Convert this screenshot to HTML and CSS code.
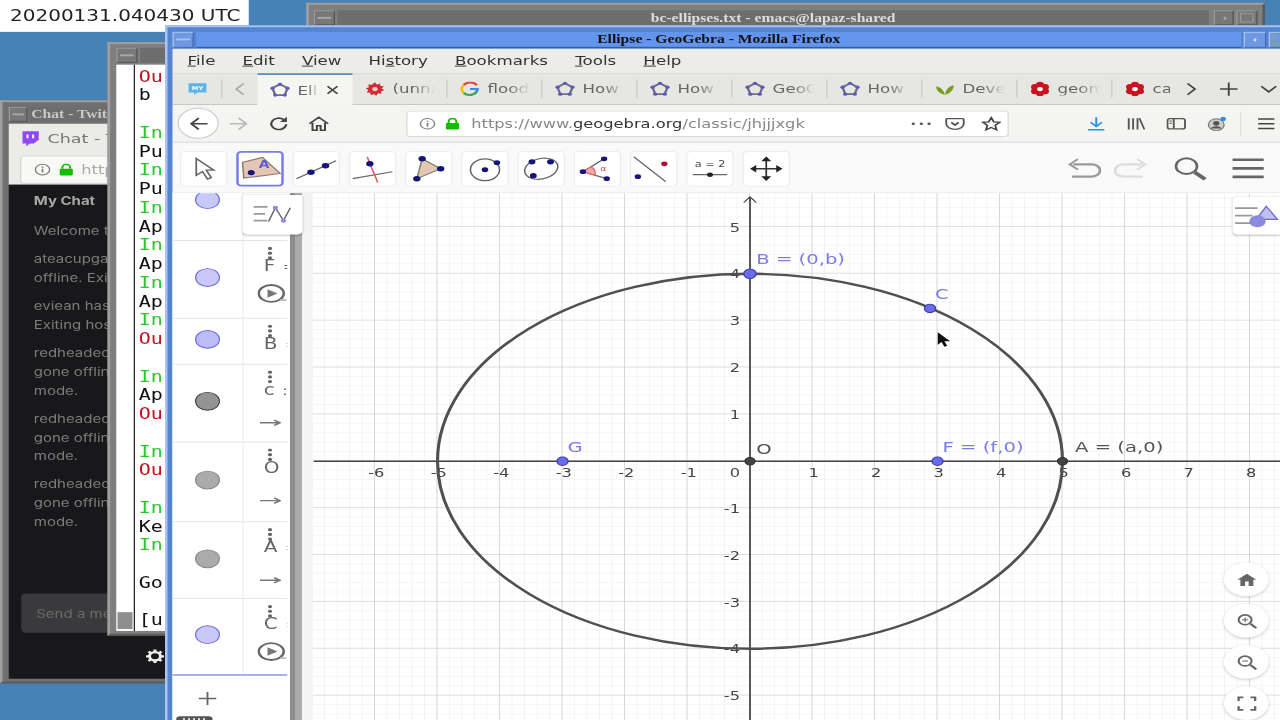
FILE: index.html
```html
<!DOCTYPE html>
<html lang="en">
<head>
<meta charset="utf-8">
<title>Ellipse - GeoGebra</title>
<link rel="stylesheet" href="styles.css">
</head>
<body>
<svg class="defs" width="0" height="0" aria-hidden="true">
  <symbol id="ggb" viewBox="0 0 16 16">
    <path d="M8 1.800 14 6 11.800 13.400 4.200 13.400 2 6Z" fill="none" stroke="#6e6e7c" stroke-width="1.900"/>
    <g fill="#5f58c4"><circle cx="8" cy="1.800" r="1.700"/><circle cx="14" cy="6" r="1.700"/><circle cx="11.800" cy="13.400" r="1.700"/><circle cx="4.200" cy="13.400" r="1.700"/><circle cx="2" cy="6" r="1.700"/></g>
  </symbol>
  <symbol id="burst" viewBox="0 0 16 16">
    <path d="M8 .8 9.500 3.400 12 2 12.300 4.800 15 5 13.400 7.300 15.400 9.300 12.800 10.200 13.200 13 10.400 12.500 9 15.200 7 13.200 4.800 14.600 4.200 11.800 1.400 11.600 2.600 9 .6 7 3.200 6 2.600 3.200 5.500 3.500Z" fill="#cf2a30"/>
    <circle cx="8" cy="8" r="2.200" fill="#f3c8c8"/>
  </symbol>
  <symbol id="flower" viewBox="0 0 16 16">
    <g fill="#c8141e"><circle cx="8" cy="3.500" r="3.200"/><circle cx="12" cy="5.800" r="3.200"/><circle cx="12" cy="10.200" r="3.200"/><circle cx="8" cy="12.500" r="3.200"/><circle cx="4" cy="10.200" r="3.200"/><circle cx="4" cy="5.800" r="3.200"/></g>
    <circle cx="8" cy="8" r="2.300" fill="#fff"/>
  </symbol>
  <symbol id="dots" viewBox="0 0 4 14">
    <g fill="#666"><circle cx="2" cy="2" r="1.700"/><circle cx="2" cy="7" r="1.700"/><circle cx="2" cy="12" r="1.700"/></g>
  </symbol>
  <symbol id="play" viewBox="0 0 24 22">
    <ellipse cx="11" cy="11" rx="10" ry="9" fill="#fff" stroke="#666" stroke-width="2"/>
    <path d="M8 6.500 16 11 8 15.500Z" fill="#777"/>
    <path d="M18 18h5" stroke="#bbb" stroke-width="2"/>
  </symbol>
  <symbol id="arrow" viewBox="0 0 18 10">
    <path d="M0 5h15M12 2l5 3-5 3" fill="none" stroke="#777" stroke-width="1.600"/>
  </symbol>
  <symbol id="info" viewBox="0 0 16 16">
    <circle cx="8" cy="8" r="6.500" fill="none" stroke="#777" stroke-width="1.200"/>
    <path d="M8 7v4.500M8 4.200v1.400" stroke="#777" stroke-width="1.500"/>
  </symbol>
  <symbol id="lock" viewBox="0 0 16 16">
    <path d="M4.500 7V5a3.500 3.500 0 0 1 7 0v2" fill="none" stroke="#12bc00" stroke-width="1.800"/>
    <rect x="2" y="7" width="12" height="8" rx="1" fill="#12bc00"/>
  </symbol>
</svg>

<div class="desktop">
  <div class="stamp">20200131.040430 UTC</div>

  <section class="win win-gray emacs">
    <div class="titlebar">
      <span class="wbtn wbtn-menu"></span>
      <span class="wtitle">bc-ellipses.txt - emacs@lapaz-shared</span>
      <span class="wbtn wbtn-small"></span>
      <span class="wbtn wbtn-max"></span>
    </div>
  </section>

  <section class="win win-gray chat">
    <div class="titlebar chat-titlebar">
      <span class="wbtn wbtn-menu"></span>
      <span class="wtitle wtitle-left">Chat - Twitch</span>
    </div>
    <div class="chat-browser">
      <div class="chat-head">
        <svg class="twitch" viewBox="0 0 16 17"><path d="M2 1h13v9l-4 4H8l-3 3v-3H2Z" fill="#9146ff"/><path d="M6 4.500v4M10.500 4.500v4" stroke="#fff" stroke-width="1.600"/></svg>
        <span>Chat - T</span>
      </div>
      <div class="chat-url">
        <svg class="ico14"><use href="#info"/></svg>
        <svg class="ico14"><use href="#lock"/></svg>
        <span>http</span>
      </div>
    </div>
    <div class="chat-dark">
      <div class="chat-tab">My Chat</div>
      <div class="chat-log">
        <p>Welcome t</p>
        <p>ateacupga<br>offline. Exit</p>
        <p>eviean has<br>Exiting hos</p>
        <p>redheaded<br>gone offlin<br>mode.</p>
        <p>redheaded<br>gone offlin<br>mode.</p>
        <p>redheaded<br>gone offlin<br>mode.</p>
      </div>
      <div class="chat-input">Send a me</div>
      <div class="chat-foot">
        <svg class="gear" viewBox="0 0 20 20"><circle cx="10" cy="10" r="5.500" fill="none" stroke="#eee" stroke-width="3"/><path d="M10 1v3M10 16v3M1 10h3M16 10h3M3.600 3.600l2.200 2.200M14.200 14.200l2.200 2.200M3.600 16.400l2.200-2.200M14.200 5.800l2.200-2.200" stroke="#eee" stroke-width="3"/></svg>
      </div>
    </div>
  </section>

  <section class="win win-gray term">
    <div class="titlebar">
      <span class="wbtn wbtn-menu"></span>
      <span class="wtitle"></span>
    </div>
    <div class="term-body">
      <div class="term-scroll"><span class="grip"></span></div>
      <div class="term-text">
        <div class="out">Ou</div><div>b</div><div>&nbsp;</div>
        <div class="inp">In</div><div>Pu</div>
        <div class="inp">In</div><div>Pu</div>
        <div class="inp">In</div><div>Ap</div>
        <div class="inp">In</div><div>Ap</div>
        <div class="inp">In</div><div>Ap</div>
        <div class="inp">In</div><div class="out">Ou</div><div>&nbsp;</div>
        <div class="inp">In</div><div>Ap</div><div class="out">Ou</div><div>&nbsp;</div>
        <div class="inp">In</div><div class="out">Ou</div><div>&nbsp;</div>
        <div class="inp">In</div><div>Ke</div><div class="inp">In</div><div>&nbsp;</div>
        <div>Go</div><div>&nbsp;</div><div>[u</div>
      </div>
    </div>
  </section>

  <section class="win win-blue firefox">
    <div class="titlebar ff-titlebar">
      <span class="wbtn wbtn-menu"></span>
      <span class="wtitle">Ellipse - GeoGebra - Mozilla Firefox</span>
      <span class="wbtn wbtn-small"></span>
      <span class="wbtn wbtn-max"></span>
    </div>

    <nav class="menubar">
      <span><u>F</u>ile</span><span><u>E</u>dit</span><span><u>V</u>iew</span><span>Hi<u>s</u>tory</span><span><u>B</u>ookmarks</span><span><u>T</u>ools</span><span><u>H</u>elp</span>
    </nav>

    <div class="tabbar">
      <div class="tab-my">
        <svg viewBox="0 0 18 18" class="ico16"><path d="M1 2h16v11H9l-3 3v-3H1Z" fill="#5cb5e8"/><text x="9" y="10.500" class="my-text">MY</text></svg>
      </div>
      <div class="tab-scroll">
        <svg viewBox="0 0 10 14" class="chev"><path d="M8 1 2 7l6 6" fill="none" stroke="#aaa" stroke-width="1.600"/></svg>
      </div>
      <div class="tab tab-active"><svg class="ico16"><use href="#ggb"/></svg><span class="tab-label tab-label-short">Ell</span><svg class="tab-x" viewBox="0 0 12 12"><path d="M2 2l8 8M10 2l-8 8" stroke="#444" stroke-width="1.500"/></svg></div>
      <div class="tab"><svg class="ico16"><use href="#burst"/></svg><span class="tab-label">(unna</span></div>
      <div class="tab"><svg class="ico16" viewBox="0 0 16 16"><path d="M13.500 4A6.200 6.200 0 0 0 3 3.800" fill="none" stroke="#ea4335" stroke-width="2.200"/><path d="M3 3.800a6.200 6.200 0 0 0 0 8.400" fill="none" stroke="#fbbc05" stroke-width="2.200"/><path d="M3 12.200a6.200 6.200 0 0 0 10.500-2" fill="none" stroke="#34a853" stroke-width="2.200"/><path d="M8 8h6a6 6 0 0 1-1 3" fill="none" stroke="#4285f4" stroke-width="2.200"/></svg><span class="tab-label">flood</span></div>
      <div class="tab"><svg class="ico16"><use href="#ggb"/></svg><span class="tab-label">How</span></div>
      <div class="tab"><svg class="ico16"><use href="#ggb"/></svg><span class="tab-label">How</span></div>
      <div class="tab"><svg class="ico16"><use href="#ggb"/></svg><span class="tab-label">GeoG</span></div>
      <div class="tab"><svg class="ico16"><use href="#ggb"/></svg><span class="tab-label">How</span></div>
      <div class="tab"><svg class="ico16" viewBox="0 0 16 16"><path d="M8 14C7 9 4 6 1 5c0 5 3 8 7 9ZM8 14c1-6 3-9 7-10 0 5-3 9-7 10Z" fill="#7a9a1e"/></svg><span class="tab-label">Deve</span></div>
      <div class="tab"><svg class="ico16"><use href="#flower"/></svg><span class="tab-label">geom</span></div>
      <div class="tab tab-last"><svg class="ico16"><use href="#flower"/></svg><span class="tab-label">ca</span></div>
      <div class="tab-tools">
        <svg viewBox="0 0 10 14" class="chev"><path d="M2 1l6 6-6 6" fill="none" stroke="#444" stroke-width="1.600"/></svg>
        <svg viewBox="0 0 16 16" class="ico16"><path d="M8 1v14M1 8h14" stroke="#444" stroke-width="1.500"/></svg>
        <svg viewBox="0 0 14 10" class="chev-down"><path d="M1 2l6 6 6-6" fill="none" stroke="#444" stroke-width="1.600"/></svg>
      </div>
    </div>

    <div class="navbar">
      <button class="nav-back"><svg viewBox="0 0 18 18" class="ico18"><path d="M16 9H3M9 3 3 9l6 6" fill="none" stroke="#444" stroke-width="1.700"/></svg></button>
      <svg viewBox="0 0 18 18" class="ico18 nav-fwd"><path d="M2 9h13M9 3l6 6-6 6" fill="none" stroke="#bbb" stroke-width="1.700"/></svg>
      <svg viewBox="0 0 18 18" class="ico18 nav-item"><path d="M15 9.500A6 6 0 1 1 13 4.600" fill="none" stroke="#444" stroke-width="1.800"/><path d="M15.500 1.500V7H10Z" fill="#444"/></svg>
      <svg viewBox="0 0 18 18" class="ico18 nav-item"><path d="M1.500 9 9 2l7.500 7M4 8v8h3.500v-5h3v5H14V8" fill="none" stroke="#444" stroke-width="1.600"/></svg>
      <div class="urlbar">
        <svg class="ico14"><use href="#info"/></svg>
        <svg class="ico14 url-lock"><use href="#lock"/></svg>
        <span class="url-text">https://www.<b>geogebra.org</b>/classic/jhjjjxgk</span>
        <span class="url-more">•••</span>
        <svg viewBox="0 0 16 16" class="ico16 url-ico"><path d="M2 2.500h12a1 1 0 0 1 1 1V8a7 6 0 0 1-14 0V3.500a1 1 0 0 1 1-1Z" fill="none" stroke="#555" stroke-width="1.500"/><path d="M5 6.500 8 9.500l3-3" fill="none" stroke="#555" stroke-width="1.700"/></svg>
        <svg viewBox="0 0 16 16" class="ico16 url-ico"><path d="M8 1.500 10 6l4.800.500-3.600 3.200 1 4.800L8 12l-4.200 2.500 1-4.800L1.200 6.500 6 6Z" fill="none" stroke="#444" stroke-width="1.500"/></svg>
      </div>
      <div class="nav-right">
        <svg viewBox="0 0 16 16" class="ico16"><path d="M8 1v9M3.500 6.500 8 11l4.500-4.500M1.500 14.500h13" fill="none" stroke="#2a90e8" stroke-width="1.600"/></svg>
        <svg viewBox="0 0 16 16" class="ico16"><path d="M2 2v12M5.500 2v12M9 2v12M10.500 2l4 12" fill="none" stroke="#555" stroke-width="1.500"/></svg>
        <svg viewBox="0 0 16 16" class="ico16"><rect x="1" y="2.500" width="14" height="11" rx="2" fill="none" stroke="#555" stroke-width="1.500"/><path d="M6 3v10" stroke="#555" stroke-width="1.500"/><path d="M2.500 5h2M2.500 7.500h2" stroke="#555"/></svg>
        <svg viewBox="0 0 16 16" class="ico16"><circle cx="8" cy="9" r="6.300" fill="#ccc" stroke="#777"/><circle cx="8" cy="7.500" r="2.500" fill="#555"/><path d="M3.500 13a5 4 0 0 1 9 0" fill="#555"/><circle cx="13.500" cy="2.800" r="2.200" fill="#2a90e8"/></svg>
        <span class="nav-sep"></span>
        <svg viewBox="0 0 16 16" class="ico16"><path d="M1.500 3h13M1.500 8h13M1.500 13h13" stroke="#444" stroke-width="1.500"/></svg>
      </div>
    </div>

    <div class="ggb-toolbar">
      <button class="tool"><svg class="tool-plain" viewBox="0 0 28 28"><path d="M8 3v18l5-4 4 8 3-1.500-4-8h6Z" fill="#fff" stroke="#666" stroke-width="1.400"/></svg></button>
      <button class="tool tool-active"><svg viewBox="0 0 36 28"><path d="M4 7 20 2 34 19 5 24Z" fill="#e3c6b4" stroke="#8a7a70" stroke-width="1.200"/><circle cx="11" cy="18" r="2.800" fill="#14147a"/><text x="17" y="13" class="tool-a">A</text></svg></button>
      <button class="tool"><svg viewBox="0 0 34 26"><path d="M2 23 32 5" stroke="#666" stroke-width="1.200"/><circle cx="13" cy="16.500" r="2.800" fill="#14147a"/><circle cx="24" cy="10" r="2.800" fill="#14147a"/></svg></button>
      <button class="tool"><svg viewBox="0 0 34 28"><path d="M2 24 32 17" stroke="#666" stroke-width="1.200"/><path d="M13 2 21 28" stroke="#e0555f" stroke-width="1.200"/><circle cx="15" cy="9" r="2.800" fill="#14147a"/></svg></button>
      <button class="tool"><svg viewBox="0 0 34 28"><path d="M12 4 26 14 8 24Z" fill="#e3c6b4" stroke="#7d8a6a" stroke-width="1.200"/><circle cx="12" cy="4" r="2.800" fill="#14147a"/><circle cx="26" cy="14" r="2.800" fill="#14147a"/><circle cx="8" cy="24" r="2.800" fill="#14147a"/></svg></button>
      <button class="tool"><svg viewBox="0 0 34 28"><circle cx="17" cy="15" r="11" fill="none" stroke="#666" stroke-width="1.200"/><circle cx="17" cy="15" r="2.500" fill="#14147a"/><circle cx="26" cy="8" r="2.500" fill="#14147a"/></svg></button>
      <button class="tool"><svg viewBox="0 0 34 28"><ellipse cx="17" cy="14" rx="13" ry="10" transform="rotate(-25 17 14)" fill="none" stroke="#666" stroke-width="1.200"/><circle cx="10" cy="7" r="2.600" fill="#14147a"/><circle cx="24" cy="7" r="2.600" fill="#14147a"/><circle cx="11" cy="21" r="2.600" fill="#14147a"/></svg></button>
      <button class="tool"><svg viewBox="0 0 34 28"><path d="M22 4 6 17 24 24" fill="none" stroke="#666" stroke-width="1.200"/><path d="M12 12A8 8 0 0 1 15 20.500L6 17Z" fill="#f4a9a0" stroke="#d66"/><circle cx="22" cy="4" r="2.400" fill="#14147a"/><circle cx="6" cy="17" r="2.400" fill="#14147a"/><circle cx="24" cy="24" r="2.400" fill="#14147a"/><text x="19" y="16" class="tool-alpha">α</text></svg></button>
      <button class="tool"><svg viewBox="0 0 34 28"><path d="M2 2 26 27" stroke="#666" stroke-width="1.200"/><circle cx="5" cy="22" r="2.400" fill="#14147a"/><circle cx="25" cy="9" r="2.400" fill="#b01030"/></svg></button>
      <button class="tool"><svg viewBox="0 0 34 28"><text x="17" y="12" class="tool-eq">a = 2</text><path d="M4 20h26" stroke="#666" stroke-width="1.200"/><circle cx="17" cy="20" r="2.200" fill="#222"/></svg></button>
      <button class="tool"><svg class="tool-plain" viewBox="0 0 28 28"><path d="M14 3v22M3 14h22" stroke="#333" stroke-width="1.400"/><path d="M14 1l4 5h-8ZM14 27l4-5h-8ZM1 14l5-4v8ZM27 14l-5-4v8Z" fill="#222"/></svg></button>
      <div class="tool-right">
        <svg viewBox="0 0 30 24" class="act"><path d="M6 7h16a6 6 0 0 1 0 14H5" fill="none" stroke="#999" stroke-width="2.400"/><path d="M10 1 3 7l7 6" fill="none" stroke="#999" stroke-width="2"/></svg>
        <svg viewBox="0 0 30 24" class="act act-redo"><path d="M24 7H8a6 6 0 0 0 0 14h17" fill="none" stroke="#ddd" stroke-width="2.400"/><path d="M20 1l7 6-7 6" fill="none" stroke="#ddd" stroke-width="2"/></svg>
        <svg viewBox="0 0 30 26" class="act act-search"><circle cx="12" cy="10" r="9" fill="none" stroke="#666" stroke-width="2.200"/><path d="M19 17l9 8" stroke="#666" stroke-width="4"/></svg>
        <svg viewBox="0 0 28 24" class="act act-menu"><path d="M1 2.500h26M1 12h26M1 21.500h26" stroke="#666" stroke-width="3"/></svg>
      </div>
    </div>

    <div class="ggb-main">
      <aside class="algebra">
        <div class="alg-row alg-first"><span class="marble m-blue"></span><div class="alg-tag"><svg class="dots"><use href="#dots"/></svg></div></div>
        <div class="alg-row alg-tall"><span class="marble m-blue"></span><div class="alg-tag"><svg class="dots"><use href="#dots"/></svg><span class="alg-name">F <i>=</i></span><svg class="play"><use href="#play"/></svg></div></div>
        <div class="alg-row alg-short"><span class="marble m-blue2"></span><div class="alg-tag"><svg class="dots"><use href="#dots"/></svg><span class="alg-name">B <i>=</i></span></div></div>
        <div class="alg-row alg-tall"><span class="marble m-dark"></span><div class="alg-tag"><svg class="dots"><use href="#dots"/></svg><span class="alg-name">c <i>:</i></span><svg class="arr"><use href="#arrow"/></svg></div></div>
        <div class="alg-row alg-tall2"><span class="marble m-gray"></span><div class="alg-tag"><svg class="dots"><use href="#dots"/></svg><span class="alg-name">O <i>=</i></span><svg class="arr"><use href="#arrow"/></svg></div></div>
        <div class="alg-row alg-mid"><span class="marble m-gray"></span><div class="alg-tag"><svg class="dots"><use href="#dots"/></svg><span class="alg-name">A <i>=</i></span><svg class="arr"><use href="#arrow"/></svg></div></div>
        <div class="alg-row alg-mid alg-last"><span class="marble m-blue"></span><div class="alg-tag"><svg class="dots"><use href="#dots"/></svg><span class="alg-name">C <i>=</i></span><svg class="play"><use href="#play"/></svg></div></div>
        <div class="alg-add">
          <svg viewBox="0 0 16 16" class="ico16"><path d="M8 1v14M1 8h14" stroke="#666" stroke-width="1.500"/></svg>
        </div>
        <div class="kbd-tab"><span></span></div>
      </aside>
      <div class="alg-toggle">
        <svg viewBox="0 0 36 24"><path d="M1 3h12M1 11h10M1 19h12" stroke="#999" stroke-width="2"/><path d="M14 20 20 4 27 19 33 4" fill="none" stroke="#666" stroke-width="1.300"/><circle cx="20" cy="4" r="2.300" fill="#8a8ae0"/><circle cx="27" cy="19" r="2.300" fill="#8a8ae0"/></svg>
      </div>
      <div class="divider"></div>
      <div class="graph">
        <svg class="plot" viewBox="250 206 774 562" xmlns="http://www.w3.org/2000/svg">
          <defs>
            <pattern id="minor" x="600" y="492" width="10" height="10" patternUnits="userSpaceOnUse"><path d="M10 0V10M0 10H10" fill="none" stroke="#eeeeee" stroke-width="1"/></pattern>
            <pattern id="major" x="600" y="492" width="50" height="50" patternUnits="userSpaceOnUse"><path d="M50 0V50M0 50H50" fill="none" stroke="#c9c9c9" stroke-width="1"/></pattern>
          </defs>
          <rect x="250" y="206" width="774" height="562" fill="#fff"/>
          <rect x="250" y="206" width="774" height="562" fill="url(#minor)"/>
          <rect x="250" y="206" width="774" height="562" fill="url(#major)"/>
          <path d="M251 492H1024M600 211V768" stroke="#444" stroke-width="1.400"/>
          <path d="M595 216 600 210 605 216" fill="none" stroke="#444" stroke-width="1.100"/>
          <g class="ticks-x">
            <text x="301" y="509">-6</text><text x="351" y="509">-5</text><text x="401" y="509">-4</text><text x="451" y="509">-3</text><text x="501" y="509">-2</text><text x="551" y="509">-1</text><text x="588" y="509">0</text><text x="651" y="509">1</text><text x="701" y="509">2</text><text x="751" y="509">3</text><text x="801" y="509">4</text><text x="851" y="509">5</text><text x="901" y="509">6</text><text x="951" y="509">7</text><text x="1001" y="509">8</text>
          </g>
          <g class="ticks-y">
            <text x="592" y="247">5</text><text x="592" y="297">4</text><text x="592" y="347">3</text><text x="592" y="397">2</text><text x="592" y="447">1</text><text x="592" y="547">-1</text><text x="592" y="597">-2</text><text x="592" y="647">-3</text><text x="592" y="697">-4</text><text x="592" y="747">-5</text>
          </g>
          <ellipse cx="600" cy="492" rx="250" ry="200" fill="none" stroke="#505050" stroke-width="2.500"/>
          <circle class="pt" cx="600" cy="292" r="5"/>
          <circle class="pt" cx="744" cy="329" r="4.500"/>
          <circle class="pt" cx="750" cy="492" r="4.500"/>
          <circle class="pt" cx="450" cy="492" r="4.500"/>
          <circle class="pt-dark" cx="850" cy="492" r="4"/>
          <circle class="pt-dark" cx="600" cy="492" r="4"/>
          <text class="lbl" x="605" y="282">B = (0,b)</text>
          <text class="lbl" x="748" y="319">C</text>
          <text class="lbl" x="754" y="482">F = (f,0)</text>
          <text class="lbl" x="454" y="482">G</text>
          <text class="lbl-dark" x="860" y="482">A = (a,0)</text>
          <text class="lbl-dark" x="605" y="484">O</text>
        </svg>
        <div class="style-btn">
          <svg viewBox="0 0 36 26"><path d="M1 5h18M1 13h14M1 21h14" stroke="#999" stroke-width="2"/><path d="M18 17 26 3 35 17Z" fill="#a5a5ee" fill-opacity=".7" stroke="#6a6ad0" stroke-width="1.200"/><circle cx="19" cy="19" r="6.500" fill="#8a8ae0"/></svg>
        </div>
        <div class="view-btns">
          <span class="round"><svg viewBox="0 0 18 18"><path d="M9 2 1 9h2.500v7h4v-5h3v5h4V9H17Z" fill="#666"/></svg></span>
          <span class="round"><svg viewBox="0 0 18 18"><circle cx="7.500" cy="7.500" r="5.500" fill="none" stroke="#666" stroke-width="1.800"/><path d="M12 12l5 5" stroke="#666" stroke-width="2.200"/><path d="M5 7.500h5M7.500 5v5" stroke="#666"/></svg></span>
          <span class="round"><svg viewBox="0 0 18 18"><circle cx="7.500" cy="7.500" r="5.500" fill="none" stroke="#666" stroke-width="1.800"/><path d="M12 12l5 5" stroke="#666" stroke-width="2.200"/><path d="M5 7.500h5" stroke="#666"/></svg></span>
          <span class="round"><svg viewBox="0 0 18 18"><path d="M2 6V2h4M12 2h4v4M16 12v4h-4M6 16H2v-4" fill="none" stroke="#666" stroke-width="2"/></svg></span>
        </div>
      </div>
    </div>
  </section>

  <svg class="cursor" viewBox="0 0 12 18"><path d="M0 0V15L3.500 11.500 6 17 8.500 16 6 10.500H11Z" fill="#111"/></svg>
</div>
</body>
</html>
```

FILE: styles.css
```css
html, body {
  margin: 0;
  width: 1280px;
  height: 720px;
  overflow: hidden;
  background: #4682b4;
}
.defs { position: absolute; }
button { font: inherit; margin: 0; padding: 0; }

/* The capture is a 1024x768 screen stretched to 1280x720 */
.desktop {
  position: relative;
  width: 1024px;
  height: 768px;
  overflow: hidden;
  background: #4682b4;
  transform: scale(1.25, 0.9375);
  transform-origin: 0 0;
  filter: blur(0.45px);
  font-family: "DejaVu Sans", sans-serif;
}

.stamp {
  position: absolute;
  left: 0;
  top: 0;
  width: 191px;
  height: 34px;
  padding-left: 8px;
  background: #fff;
  color: #222;
  font-size: 16px;
  line-height: 33px;
}

/* window manager frames */
.win { position: absolute; box-sizing: border-box; overflow: hidden; }
.win-gray {
  background: #7f7f7f;
  border: 2px solid;
  border-color: #a0a0a0 #5a5a5a #5a5a5a #a0a0a0;
  padding: 4px;
}
.win-blue {
  background: #5585d0;
  border: 2px solid;
  border-color: #a9c3f2 #3e68b8 #3e68b8 #a9c3f2;
  padding: 5px 0 0 4px;
}
.titlebar { display: flex; height: 16px; gap: 2px; align-items: stretch; }
.wtitle {
  flex: 1;
  min-width: 0;
  overflow: hidden;
  white-space: nowrap;
  font: bold 12.5px/16px "Liberation Serif", serif;
  text-align: center;
  background: #6d6d6d;
  color: #ddd;
}
.wtitle-left { text-align: left; padding-left: 4px; }
.wbtn {
  width: 17px;
  flex: none;
  box-sizing: border-box;
  background: #787878;
  border: 1px solid;
  border-color: #9a9a9a #555 #555 #9a9a9a;
  position: relative;
}
.wbtn-menu::after {
  content: "";
  position: absolute;
  left: 2px; right: 2px; top: 6px;
  height: 2px;
  background: #a8a8a8;
}
.wbtn-small::after {
  content: "";
  position: absolute;
  left: 7px; top: 6px;
  width: 2px; height: 3px;
  background: #aaa;
}
.wbtn-max::after {
  content: "";
  position: absolute;
  left: 2px; top: 2px; right: 2px; bottom: 2px;
  border: 1px solid #999;
}

.emacs { left: 245px; top: 3px; width: 767px; height: 60px; }
.emacs .titlebar { margin: 2px 0 0 0; }
.emacs .wbtn-small { width: 16px; margin-left: 2px; }

/* chat window */
.chat { left: 0; top: 107px; width: 140px; height: 622px; padding: 5px 6px 3px 5px; display: flex; flex-direction: column; background: #707070; }
.chat-titlebar .wbtn { width: 15px; }
.chat-titlebar .wtitle { padding-left: 1px; color: #c8c8c8; }
.chat-browser { background: #ebebe8; height: 65px; margin-top: 2px; color: #777; box-sizing: border-box; padding: 5px 0 0 9px; }
.chat-head { display: flex; align-items: center; gap: 6px; height: 20px; font-size: 14px; white-space: nowrap; }
.twitch { width: 16px; height: 17px; flex: none; }
.chat-url {
  margin-top: 9px;
  height: 30px;
  background: #f8f8f6;
  border: 1px solid #d4d4d0;
  border-radius: 3px;
  box-sizing: border-box;
  display: flex;
  align-items: center;
  gap: 5px;
  padding-left: 10px;
  font-size: 13px;
  color: #aaa;
}
.ico14 { width: 14px; height: 14px; flex: none; }
.chat-dark { flex: 1; background: #18181b; color: #7c7c7c; position: relative; display: flex; flex-direction: column; font-family: Inter, sans-serif; }
.chat-tab { padding: 10px 0 0 20px; height: 28px; box-sizing: border-box; font-size: 12px; font-weight: bold; line-height: 16px; color: #a8a8a8; }
.chat-log { padding: 12px 0 0 20px; font-size: 12px; line-height: 20px; flex: 1; white-space: nowrap; }
.chat-log p { margin: 0 0 10px; }
.chat-input {
  margin-left: 10px;
  width: 120px;
  height: 42px;
  box-sizing: border-box;
  padding: 14px 0 0 12px;
  border-radius: 4px;
  background: #3a3a3d;
  color: #6a6a6a;
  font-size: 12px;
}
.chat-foot { height: 49px; display: flex; justify-content: flex-end; align-items: center; }
.gear { width: 16px; height: 16px; }

/* terminal */
.term { left: 86px; top: 45px; width: 120px; height: 633px; padding: 4px 5px 3px 5px; display: flex; flex-direction: column; }
.term .wbtn { width: 17px; }
.term-body { flex: 1; display: flex; margin-top: 2px; background: #fff; min-height: 0; }
.term-scroll {
  width: 14px;
  border-right: 1px solid #222;
  display: flex;
  align-items: flex-end;
  justify-content: center;
  flex: none;
  padding-bottom: 2px;
}
.grip { width: 12px; height: 18px; background: #8e8e8e; }
.term-text {
  padding: 3px 0 0 3px;
  font: 16px/20px "DejaVu Sans Mono", monospace;
  color: #111;
}
.out { color: #c81020; }
.inp { color: #2ac82a; }

/* firefox */
.firefox { left: 132px; top: 27px; width: 920px; height: 745px; display: flex; flex-direction: column; }
.ff-titlebar { flex: none; height: 17px; margin-bottom: 1px; }
.ff-titlebar .wbtn { background: #6f98e2; border-color: #a9c3f2 #3e68b8 #3e68b8 #a9c3f2; }
.ff-titlebar .wbtn-menu::after { background: #a9c3f2; }
.ff-titlebar .wbtn-small::after { background: #cfe0fa; }
.ff-titlebar .wbtn-max { width: 35px; }
.ff-titlebar .wbtn-small { width: 18px; margin-left: 0; }
.ff-titlebar .wtitle {
  background: #6495ed;
  color: #111;
  line-height: 17px;
  border-bottom: 1px solid #2d4f96;
}

.menubar {
  flex: none;
  height: 26px;
  background: #ecece8;
  display: flex;
  gap: 21.7px;
  padding-left: 12px;
  font-size: 13.33px;
  line-height: 26px;
  color: #333;
}
.tabbar {
  flex: none;
  height: 34px;
  background: #e6e6e3;
  border-bottom: 1px solid #c6c6c2;
  box-sizing: border-box;
  display: flex;
  align-items: stretch;
}
.tab-my { width: 40px; display: flex; align-items: center; justify-content: center; position: relative; }
.tab-my::after { content: ""; position: absolute; right: 0; top: 7px; bottom: 7px; width: 1px; background: #c8c8c4; }
.my-text { font: bold 6px "DejaVu Sans", sans-serif; fill: #fff; text-anchor: middle; }
.tab-scroll { width: 28px; display: flex; align-items: center; justify-content: center; }
.chev { width: 10px; height: 14px; }
.chev-down { width: 14px; height: 10px; }
.ico16 { width: 16px; height: 16px; flex: none; }
.ico18 { width: 18px; height: 18px; flex: none; }
.tab {
  width: 76px;
  box-sizing: border-box;
  padding-left: 10px;
  flex: none;
  display: flex;
  align-items: center;
  gap: 6px;
  font-size: 13.33px;
  color: #666;
  position: relative;
}
.tab::after { content: ""; position: absolute; right: 0; top: 7px; bottom: 7px; width: 1px; background: #c8c8c4; }
.tab-label {
  width: 36px;
  overflow: hidden;
  white-space: nowrap;
  -webkit-mask-image: linear-gradient(90deg, #000 45%, transparent 95%);
  mask-image: linear-gradient(90deg, #000 45%, transparent 95%);
}
.tab-label-short { width: 18px; }
.tab-x { width: 12px; height: 12px; flex: none; margin-left: -2px; }
.tab-active {
  background: #f5f5f3;
  border-top: 2px solid #5f8fd0;
  margin-bottom: -1px;
}
.tab-active::after, .tab-last::after { display: none; }
.tab-last { width: 46px; }
.tab-last .tab-label { width: 16px; -webkit-mask-image: none; mask-image: none; }
.tab-tools { display: flex; align-items: center; flex: none; }
.tab-tools .chev { margin-left: 12px; }
.tab-tools .ico16 { margin-left: 17px; }
.tab-tools .chev-down { margin-left: 17px; }

.navbar {
  flex: none;
  height: 40px;
  background: #f4f4f2;
  border-bottom: 1px solid #dcdcd8;
  box-sizing: border-box;
  display: flex;
  align-items: center;
}
.nav-back {
  width: 33px;
  height: 33px;
  margin-left: 4px;
  border-radius: 50%;
  background: #fff;
  border: 1px solid #ccc;
  display: flex;
  align-items: center;
  justify-content: center;
  flex: none;
}
.nav-fwd { margin-left: 7px; }
.nav-item { margin-left: 14px; }
.urlbar {
  width: 482px;
  height: 28px;
  margin-left: 61px;
  flex: none;
  box-sizing: border-box;
  background: #fff;
  border: 1px solid #dadad6;
  border-radius: 3px;
  display: flex;
  align-items: center;
  padding-left: 9px;
  font-size: 13px;
  color: #888;
}
.url-lock { margin-left: 6px; }
.url-text { margin-left: 8px; white-space: nowrap; flex: 1; }
.url-text b { font-weight: normal; color: #333; }
.url-more { font-size: 9px; letter-spacing: 1px; color: #555; margin-right: -4px; }
.url-ico { margin-left: 13px; }
.url-ico:last-child { margin-right: 5px; }
.nav-right { display: flex; align-items: center; gap: 16px; margin-left: 62px; }
.nav-sep { width: 1px; height: 26px; background: #dcdcd8; margin: 0 -4px 0 -5px; }

.ggb-toolbar {
  flex: none;
  height: 54px;
  background: #f9f9f9;
  display: flex;
  align-items: center;
  gap: 7px;
  padding: 2px 0 0 6px;
  box-sizing: border-box;
  border-bottom: 1px solid #eee;
}
.tool {
  width: 38px;
  height: 38px;
  flex: none;
  box-sizing: border-box;
  background: #fff;
  border: 1px solid #ececec;
  border-radius: 4px;
  display: flex;
  align-items: center;
  justify-content: center;
}
.tool svg { width: 36px; height: 32px; flex: none; }
.tool svg.tool-plain { width: 30px; height: 28px; }
.tool-active { border: 2px solid #7a7ae8; }
.tool-a { font: bold 11px "DejaVu Sans", sans-serif; fill: #5c5cd8; }
.tool-alpha { font: 7px "DejaVu Sans", sans-serif; fill: #c44; }
.tool-eq { font: 8.5px "DejaVu Sans", sans-serif; fill: #444; text-anchor: middle; }
.tool-right { display: flex; align-items: center; margin-left: 214px; }
.act { width: 28px; height: 24px; flex: none; }
.act-redo { margin-left: 10px; }
.act-search { margin-left: 19px; height: 26px; }
.act-menu { margin-left: 19px; width: 27px; height: 23px; }

.ggb-main { flex: 1; display: flex; position: relative; min-height: 0; background: #fff; }
.algebra { width: 92px; flex: none; background: #fff; overflow: hidden; position: relative; }
.alg-row { display: flex; box-sizing: border-box; border-bottom: 1px solid #e4e4e4; height: 83px; padding-bottom: 4px; }
.alg-first { margin-top: -32px; }
.alg-tall { height: 83px; }
.alg-tall2 { height: 85px; }
.alg-mid { height: 82px; }
.alg-short { height: 49px; }
.alg-last { border-bottom: 2px solid #a9a9ea; }
.marble {
  flex: none;
  box-sizing: border-box;
  width: 20px;
  height: 20px;
  margin: auto 18px;
  border-radius: 50%;
  border: 1.5px solid #6a6ad8;
  background: #c8c8fb;
}
.m-blue2 { background: #bcbcfb; }
.m-dark { background: #949494; border-color: #444; }
.m-gray { background: #ababab; border-color: #888; }
.alg-tag {
  flex: 1;
  border-left: 1px solid #eeeeee;
  margin-bottom: -4px;
  display: flex;
  flex-direction: column;
  align-items: flex-start;
  padding: 6px 0 0 19px;
  overflow: hidden;
  color: #666;
  min-width: 0;
}
.dots { width: 4px; height: 14px; flex: none; }
.alg-name { font-size: 16px; line-height: 18px; margin: -2px 0 0 -3px; white-space: nowrap; }
.alg-name i { font-style: normal; font-size: 13px; margin-left: 1px; }
.play { width: 24px; height: 22px; margin: 8px 0 0 -8px; flex: none; }
.arr { width: 17px; height: 10px; margin: 20px 0 0 -6px; flex: none; }
.alg-add { height: 48px; display: flex; align-items: center; padding-left: 20px; position: relative; }
.kbd-tab {
  position: absolute;
  left: 3px;
  bottom: 0;
  width: 29px;
  height: 6px;
  background: #555;
  border-radius: 3px 3px 0 0;
}
.kbd-tab span { display: block; margin: 2px 5px 0; height: 2px; background: repeating-linear-gradient(90deg, #ddd 0 2px, transparent 2px 4px); }
.alg-toggle {
  position: absolute;
  left: 56px;
  top: 2px;
  width: 48px;
  height: 42px;
  background: #fff;
  border-radius: 0 0 4px 4px;
  box-shadow: 0 1px 2px rgba(0,0,0,.18);
  display: flex;
  align-items: center;
  justify-content: center;
  z-index: 2;
}
.alg-toggle svg { width: 33px; height: 24px; }
.divider { width: 20px; flex: none; background: linear-gradient(90deg, #fff 0 2px, #8d8d8d 2px 6px, #ababab 6px 12px, #f3f3f3 12px); }
.graph { flex: 1; position: relative; min-width: 0; }
.plot { display: block; width: 774px; height: 562px; }
.ticks-x text, .ticks-y text { font: 13px "DejaVu Sans", sans-serif; fill: #444; text-anchor: middle; }
.ticks-y text { text-anchor: end; }
.pt { fill: #6a6aec; stroke: #3d3da8; stroke-width: 1; }
.pt-dark { fill: #444; stroke: #333; stroke-width: 1; }
.lbl { font: 15.7px "DejaVu Sans", sans-serif; fill: #7c7ce8; }
.lbl-dark { font: 15.7px "DejaVu Sans", sans-serif; fill: #555; }
.style-btn {
  position: absolute;
  left: 736px;
  top: 4px;
  width: 38px;
  height: 40px;
  background: #fff;
  border-radius: 4px 0 0 4px;
  box-shadow: 0 1px 2px rgba(0,0,0,.18);
  display: flex;
  align-items: center;
  justify-content: center;
}
.style-btn svg { width: 36px; height: 26px; }
.view-btns {
  position: absolute;
  left: 729px;
  top: 394px;
  display: flex;
  flex-direction: column;
  gap: 8px;
}
.round {
  width: 36px;
  height: 36px;
  border-radius: 50%;
  background: #fff;
  box-shadow: 0 1px 3px rgba(0,0,0,.2);
  display: flex;
  align-items: center;
  justify-content: center;
}
.round svg { width: 17px; height: 17px; }
.cursor { position: absolute; left: 750px; top: 354px; width: 11px; height: 17px; }
```
